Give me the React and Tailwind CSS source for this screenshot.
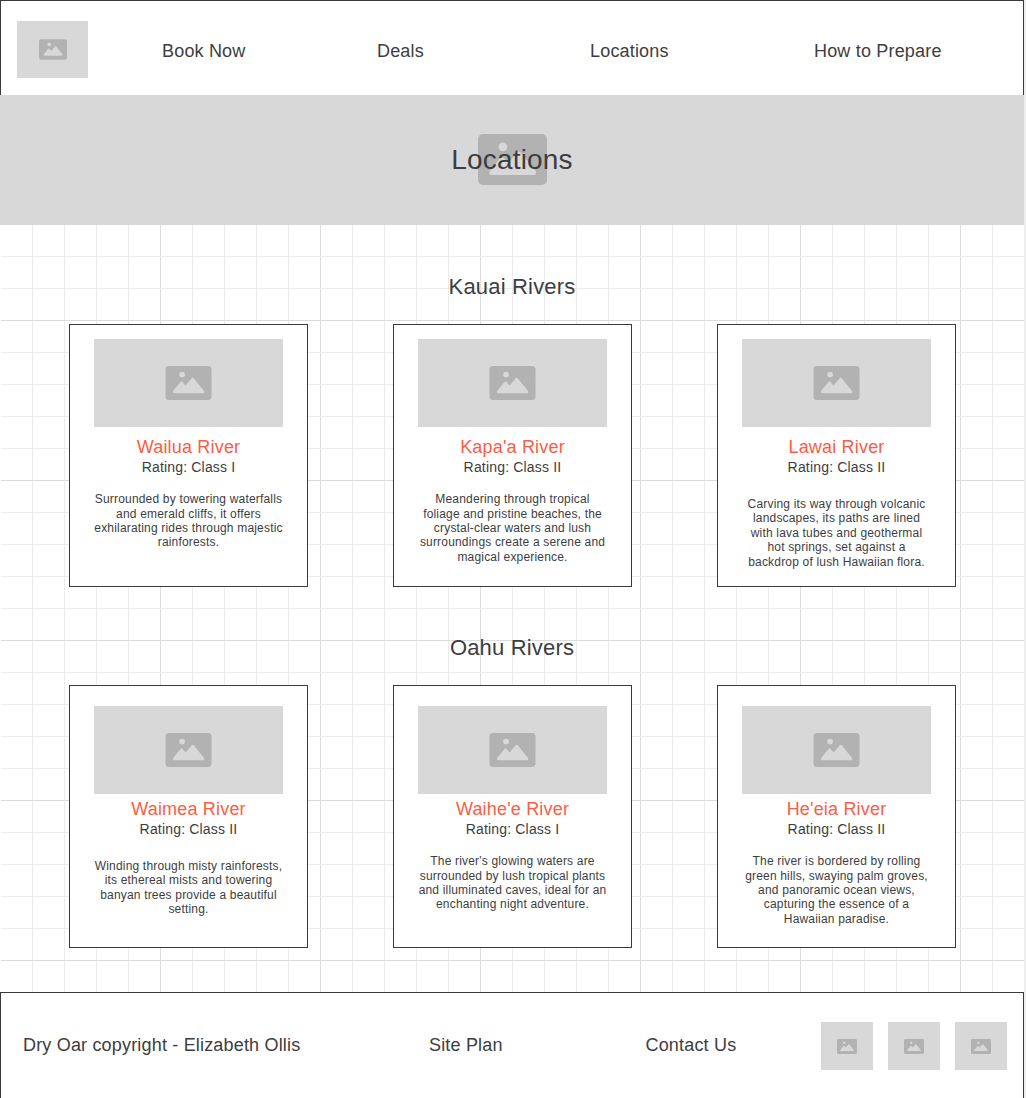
import React from "react";

const sections = [
  {
    title: "Kauai Rivers",
    top: "pt-[14px]",
    titleGap: "mt-[10px]",
    cards: [
      { name: "Wailua River", rating: "Rating: Class I", gap: "mt-[16.2px]", text: "Surrounded by towering waterfalls\nand emerald cliffs, it offers\nexhilarating rides through majestic\nrainforests." },
      { name: "Kapa'a River", rating: "Rating: Class II", gap: "mt-[16.2px]", text: "Meandering through tropical\nfoliage and pristine beaches, the\ncrystal-clear waters and lush\nsurroundings create a serene and\nmagical experience." },
      { name: "Lawai River", rating: "Rating: Class II", gap: "mt-[21px]", text: "Carving its way through volcanic\nlandscapes, its paths are lined\nwith lava tubes and geothermal\nhot springs, set against a\nbackdrop of lush Hawaiian flora." },
    ],
  },
  {
    title: "Oahu Rivers",
    top: "pt-[20px]",
    titleGap: "mt-[5px]",
    cards: [
      { name: "Waimea River", rating: "Rating: Class II", gap: "mt-[21px]", text: "Winding through misty rainforests,\nits ethereal mists and towering\nbanyan trees provide a beautiful\nsetting." },
      { name: "Waihe'e River", rating: "Rating: Class I", gap: "mt-[16.2px]", text: "The river's glowing waters are\nsurrounded by lush tropical plants\nand illuminated caves, ideal for an\nenchanting night adventure." },
      { name: "He'eia River", rating: "Rating: Class II", gap: "mt-[16.2px]", text: "The river is bordered by rolling\ngreen hills, swaying palm groves,\nand panoramic ocean views,\ncapturing the essence of a\nHawaiian paradise." },
    ],
  },
];

function PictureIcon({ className }) {
  return (
    <svg viewBox="0 0 46 34" className={className} aria-hidden="true">
      <rect width="46" height="34" rx="3.4" fill="#b2b2b2" />
      <circle cx="16.6" cy="8.6" r="2.9" fill="#d8d8d8" />
      <path
        d="M8 24.6 L15 15.9 Q16 14.8 17 15.9 L20.1 19.4 L26.2 12.2 Q27.2 11.1 28.2 12.2 L38.2 24.4 Q39.9 27.3 37 27.3 H9.2 Q6.3 27.3 8 24.6 Z"
        fill="#d8d8d8"
      />
    </svg>
  );
}

function Placeholder({ className, icon }) {
  return (
    <div className={`flex shrink-0 items-center justify-center bg-[#d8d8d8] ${className}`}>
      <PictureIcon className={icon} />
    </div>
  );
}

function RiverCard({ card, top, titleGap }) {
  return (
    <article className={`flex h-[263px] w-[239px] flex-col items-center border border-[#3a3a3c] bg-white text-center ${top}`}>
      <Placeholder className="h-[88px] w-[189px]" icon="h-[34px] w-[47px]" />
      <h3 className={`pl-px text-[18px] leading-[20px] text-[#ff5c43] ${titleGap}`}>{card.name}</h3>
      <p className="mt-px pl-px text-[14px] leading-[18px]">{card.rating}</p>
      <p className={`whitespace-pre pl-px text-[12px] leading-[14.4px] ${card.gap}`}>{card.text}</p>
    </article>
  );
}

function GridLines() {
  return (
    <svg className="absolute inset-0 h-full w-full" aria-hidden="true" shapeRendering="crispEdges">
      {Array.from({ length: 31 }, (_, i) => i + 1).map((i) => (
        <rect key={`v${i}`} x={i * 32} y="0" width="1" height="767" fill={i % 5 === 0 ? "#dcdcdc" : "#ebebeb"} />
      ))}
      {Array.from({ length: 23 }, (_, i) => i + 8).map((i) => (
        <rect key={`h${i}`} x="1" y={i * 32 - 225} width="1023" height="1" fill={i % 5 === 0 ? "#dcdcdc" : "#ebebeb"} />
      ))}
    </svg>
  );
}

export default function App() {
  return (
    <div className="flex h-[1098px] w-[1026px] overflow-hidden bg-white font-['Liberation_Sans',Arial,sans-serif] tracking-[0.18px] text-[#3d3d3f]">
      <div className="flex w-[1024px] shrink-0 flex-col">
        <header className="flex h-[95px] shrink-0 items-start border border-b-0 border-[#3a3a3c] bg-white pl-4 pt-5">
          <Placeholder className="h-[57px] w-[71px]" icon="h-[21px] w-[28px]" />
          <nav className="ml-[74px] flex pt-5 text-[18px] leading-[20px]">
            <a className="w-[215px]">Book Now</a>
            <a className="w-[213px]">Deals</a>
            <a className="w-[224px]">Locations</a>
            <a>How to Prepare</a>
          </nav>
        </header>

        <div className="relative flex h-[130px] shrink-0 items-center justify-center bg-[#d8d8d8]">
          <PictureIcon className="absolute left-[478px] top-[39px] h-[51px] w-[69px]" />
          <h1 className="relative text-[28px] leading-[32px]">Locations</h1>
        </div>

        <main className="relative h-[767px] shrink-0">
          <GridLines />
          <div className="relative pt-[49px]">
            {sections.map((section) => (
              <section key={section.title} className="mb-[48px] flex flex-col items-center">
                <h2 className="text-[22px] leading-[26px]">{section.title}</h2>
                <div className="mt-6 flex gap-[85px]">
                  {section.cards.map((card) => (
                    <RiverCard key={card.name} card={card} top={section.top} titleGap={section.titleGap} />
                  ))}
                </div>
              </section>
            ))}
          </div>
        </main>

        <footer className="flex h-[106px] shrink-0 items-start border border-b-0 border-[#3a3a3c] bg-white pl-[22px] pt-[29px] text-[18px] leading-[20px]">
          <span className="w-[406px] pt-[13px]">Dry Oar copyright - Elizabeth Ollis</span>
          <a className="w-[216.5px] pt-[13px]">Site Plan</a>
          <a className="w-[175.5px] pt-[13px]">Contact Us</a>
          <div className="flex gap-[15px]">
            <Placeholder className="h-[48px] w-[52px]" icon="h-[15px] w-[20px]" />
            <Placeholder className="h-[48px] w-[52px]" icon="h-[15px] w-[20px]" />
            <Placeholder className="h-[48px] w-[52px]" icon="h-[15px] w-[20px]" />
          </div>
        </footer>
      </div>
      <div className="w-[2px] bg-[#eeeeee]" />
    </div>
  );
}
